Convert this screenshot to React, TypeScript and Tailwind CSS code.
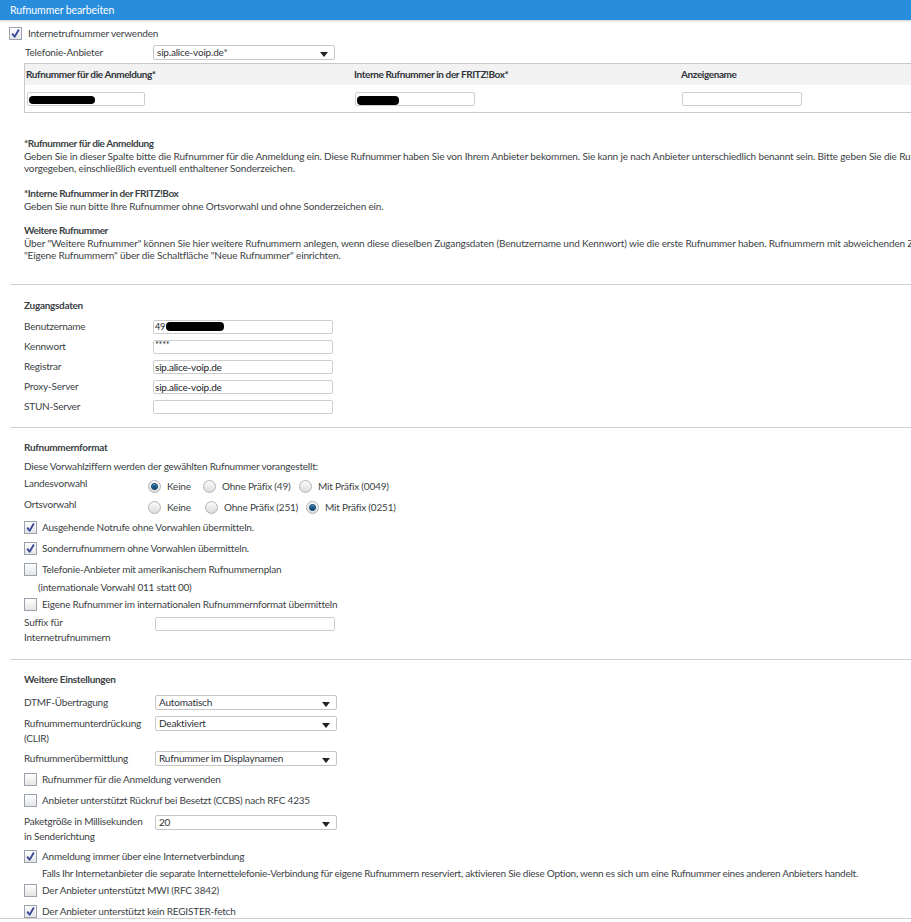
import React from 'react'

const Check = ({ checked = false }: { checked?: boolean }) => (
  <span className="w-[13px] h-[13px] shrink-0 border border-[#9aa3ab] bg-gradient-to-b from-white to-[#e4e4e4] flex items-center justify-center">
    {checked && (
      <svg width="11" height="11" viewBox="0 0 11 11">
        <path d="M2.2 5.6 L4.6 8.8 L8.9 1.6" fill="none" stroke="#3a4a9c" strokeWidth="1.9" strokeLinejoin="round" />
      </svg>
    )}
  </span>
)

const Radio = ({ on = false }: { on?: boolean }) => (
  <span className="w-[13px] h-[13px] shrink-0 rounded-full border border-[#b4b4b4] bg-gradient-to-b from-[#fafafa] to-[#dcdcdc] flex items-center justify-center">
    {on && <span className="w-[7px] h-[7px] rounded-full bg-[#14507e] border border-[#0d3c61] shadow-[inset_0_1px_1px_rgba(120,190,240,0.9)]" />}
  </span>
)

const Arrow = () => (
  <svg width="8" height="5" viewBox="0 0 8 5" className="mt-[4px]">
    <path d="M0 0 H8 L4 5 Z" fill="#222" />
  </svg>
)

const Select = ({ value, w = 'w-[182px]' }: { value: string; w?: string }) => (
  <div className={`${w} h-[15px] shrink-0 border border-[#c6c6c6] rounded-[2px] bg-white pl-[3px] pr-[6px] flex items-center justify-between leading-[13px] text-[#2e3237]`}>
    <span>{value}</span>
    <Arrow />
  </div>
)

const Input = ({ children, w = 'w-[180px]' }: { children?: React.ReactNode; w?: string }) => (
  <div className={`${w} h-[14px] shrink-0 border border-[#cdcdcd] rounded-[2px] bg-white pl-[1px] flex items-center leading-[12px] text-[#202327] overflow-hidden`}>
    {children}
  </div>
)

const CheckRow = ({ checked, label }: { checked?: boolean; label: string }) => (
  <div className="h-[21px] flex items-center gap-[5px] whitespace-nowrap">
    <Check checked={checked} />
    <span>{label}</span>
  </div>
)

const RadioItem = ({ on, label, w }: { on?: boolean; label: string; w: string }) => (
  <span className={`${w} flex items-center gap-[6px] whitespace-nowrap`}>
    <Radio on={on} />
    {label}
  </span>
)

const Separator = () => <div className="ml-[1px] border-t border-[#d2d2d2]" />

export default function App() {
  return (
    <div className="w-[911px] h-[922px] overflow-hidden relative bg-white text-[#3b3f45] text-[10px] tracking-[-0.2px] font-['Lato','Liberation_Sans',sans-serif]">
      {/* title bar */}
      <div className="h-[20px] bg-[#288ddd] text-white text-[10.5px] tracking-[-0.1px] leading-[20px] pl-[10px] shadow-[0_1px_2px_rgba(0,0,0,0.2)]">
        Rufnummer bearbeiten
      </div>

      <div className="pl-[9px] w-[1100px]">
        <div className="mt-[6px] h-[14px] flex items-center gap-[6px]">
          <Check checked />
          <span>Internetrufnummer verwenden</span>
        </div>

        <div className="mt-[5px] pl-[16px] flex items-center">
          <span className="w-[128px]">Telefonie-Anbieter</span>
          <Select value="sip.alice-voip.de*" />
        </div>

        {/* number table */}
        <div className="ml-[15px] mt-[3px] w-[1000px] border border-[#c9c9c9]">
          <div className="h-[21px] bg-[#f2f2f2] grid grid-cols-[328px_327px_1fr] items-center pl-[1px] font-bold tracking-[-0.4px] text-[#30343a]">
            <span>Rufnummer für die Anmeldung*</span>
            <span>Interne Rufnummer in der FRITZ!Box*</span>
            <span>Anzeigename</span>
          </div>
          <div className="h-[27px] grid grid-cols-[328px_327px_1fr] items-start pt-[7px] pl-[2px]">
            <Input w="w-[118px]">
              <span className="w-[66px] h-[8px] mt-[2px] rounded-[4px] bg-black" />
            </Input>
            <Input w="w-[120px]">
              <span className="w-[42px] h-[9px] mt-[2px] rounded-[4px] bg-black" />
            </Input>
            <Input w="w-[120px]" />
          </div>
        </div>

        {/* help text */}
        <div className="ml-[15px] mt-[24px] leading-[12.5px] whitespace-nowrap tracking-[-0.15px]">
          <p className="font-bold tracking-[-0.4px]">*Rufnummer für die Anmeldung</p>
          <p>
            Geben Sie in dieser Spalte bitte die Rufnummer für die Anmeldung ein. Diese Rufnummer haben Sie von Ihrem Anbieter bekommen. Sie kann je nach Anbieter unterschiedlich benannt sein. Bitte geben Sie die Rufnummer so ein, wie vom Anbieter
          </p>
          <p>vorgegeben, einschließlich eventuell enthaltener Sonderzeichen.</p>
          <p className="mt-[12.5px] font-bold tracking-[-0.4px]">*Interne Rufnummer in der FRITZ!Box</p>
          <p>Geben Sie nun bitte Ihre Rufnummer ohne Ortsvorwahl und ohne Sonderzeichen ein.</p>
          <p className="mt-[12px] font-bold tracking-[-0.4px]">Weitere Rufnummer</p>
          <p>
            Über "Weitere Rufnummer" können Sie hier weitere Rufnummern anlegen, wenn diese dieselben Zugangsdaten (Benutzername und Kennwort) wie die erste Rufnummer haben. Rufnummern mit abweichenden Zugangsdaten können Sie unter
          </p>
          <p>"Eigene Rufnummern" über die Schaltfläche "Neue Rufnummer" einrichten.</p>
        </div>

        <div className="mt-[22px]">
          <Separator />
        </div>

        {/* Zugangsdaten */}
        <div className="pl-[15px] pt-[10px] pb-[10px]">
          <div className="h-[20px] leading-[20px] font-bold tracking-[-0.3px]">Zugangsdaten</div>
          <div className="mt-[2px]">
            {[
              ['Benutzername', 'user'],
              ['Kennwort', '****'],
              ['Registrar', 'sip.alice-voip.de'],
              ['Proxy-Server', 'sip.alice-voip.de'],
              ['STUN-Server', ''],
            ].map(([label, value]) => (
              <div key={label} className="h-[20px] flex items-center">
                <span className="w-[129px]">{label}</span>
                <Input>
                  {value === 'user' ? (
                    <>
                      <span className="text-[9px]">49</span>
                      <span className="ml-[1px] w-[58px] h-[9px] rounded-[4px] bg-black" />
                    </>
                  ) : (
                    <span className={value === '****' ? 'text-[9px] -mt-[3px]' : ''}>{value}</span>
                  )}
                </Input>
              </div>
            ))}
          </div>
        </div>

        <Separator />

        {/* Rufnummernformat */}
        <div className="pl-[15px] pt-[9px] pb-[14px]">
          <div className="h-[20px] leading-[20px] font-bold tracking-[-0.3px]">Rufnummernformat</div>
          <div className="h-[18px] leading-[18px]">Diese Vorwahlziffern werden der gewählten Rufnummer vorangestellt:</div>
          <div className="h-[21px] flex items-start">
            <span className="w-[124px] pt-[1px] leading-[14px]">Landesvorwahl</span>
            <div className="mt-[5px] h-[14px] flex items-center">
              <RadioItem on label="Keine" w="w-[55px]" />
              <RadioItem label="Ohne Präfix (49)" w="w-[96px]" />
              <RadioItem label="Mit Präfix (0049)" w="w-[100px]" />
            </div>
          </div>
          <div className="h-[21px] flex items-start">
            <span className="w-[124px] pt-[1px] leading-[14px]">Ortsvorwahl</span>
            <div className="mt-[5px] h-[14px] flex items-center">
              <RadioItem label="Keine" w="w-[57px]" />
              <RadioItem label="Ohne Präfix (251)" w="w-[101px]" />
              <RadioItem on label="Mit Präfix (0251)" w="w-[100px]" />
            </div>
          </div>
          <CheckRow checked label="Ausgehende Notrufe ohne Vorwahlen übermitteln." />
          <CheckRow checked label="Sonderrufnummern ohne Vorwahlen übermitteln." />
          <CheckRow label="Telefonie-Anbieter mit amerikanischem Rufnummernplan" />
          <div className="h-[14px] leading-[14px] pl-[14px]">(internationale Vorwahl 011 statt 00)</div>
          <CheckRow label="Eigene Rufnummer im internationalen Rufnummernformat übermitteln" />
          <div className="flex items-start">
            <span className="w-[131px] leading-[15px] whitespace-nowrap">
              Suffix für
              <br />
              Internetrufnummern
            </span>
            <div className="mt-[2px]">
              <Input />
            </div>
          </div>
        </div>

        <Separator />

        {/* Weitere Einstellungen */}
        <div className="pl-[15px] pt-[9px]">
          <div className="h-[20px] leading-[20px] font-bold tracking-[-0.3px]">Weitere Einstellungen</div>
          <div className="mt-[3px] h-[21px] flex items-center">
            <span className="w-[131px]">DTMF-Übertragung</span>
            <Select value="Automatisch" />
          </div>
          <div className="h-[33px] flex items-start">
            <span className="w-[131px] pt-[3px] leading-[15px] whitespace-nowrap">
              Rufnummernunterdrückung
              <br />
              (CLIR)
            </span>
            <div className="mt-[3px]">
              <Select value="Deaktiviert" />
            </div>
          </div>
          <div className="h-[23px] flex items-start">
            <span className="w-[131px] pt-[5px] leading-[15px] whitespace-nowrap">Rufnummerübermittlung</span>
            <div className="mt-[5px]">
              <Select value="Rufnummer im Displaynamen" />
            </div>
          </div>
          <CheckRow label="Rufnummer für die Anmeldung verwenden" />
          <CheckRow label="Anbieter unterstützt Rückruf bei Besetzt (CCBS) nach RFC 4235" />
          <div className="h-[33px] flex items-start">
            <span className="w-[131px] pt-[3px] leading-[15px] whitespace-nowrap">
              Paketgröße in Millisekunden
              <br />
              in Senderichtung
            </span>
            <div className="mt-[4px]">
              <Select value="20" />
            </div>
          </div>
          <div className="mt-[2px]">
            <CheckRow checked label="Anmeldung immer über eine Internetverbindung" />
          </div>
          <div className="h-[13px] leading-[13px] pl-[18px] whitespace-nowrap tracking-[-0.25px]">
            Falls Ihr Internetanbieter die separate Internettelefonie-Verbindung für eigene Rufnummern reserviert, aktivieren Sie diese Option, wenn es sich um eine Rufnummer eines anderen Anbieters handelt.
          </div>
          <CheckRow label="Der Anbieter unterstützt MWI (RFC 3842)" />
          <CheckRow checked label="Der Anbieter unterstützt kein REGISTER-fetch" />
        </div>
      </div>

      {/* footer edge */}
      <div className="absolute left-0 right-0 top-[918px] border-t border-[#cfcfcf]" />
    </div>
  )
}
